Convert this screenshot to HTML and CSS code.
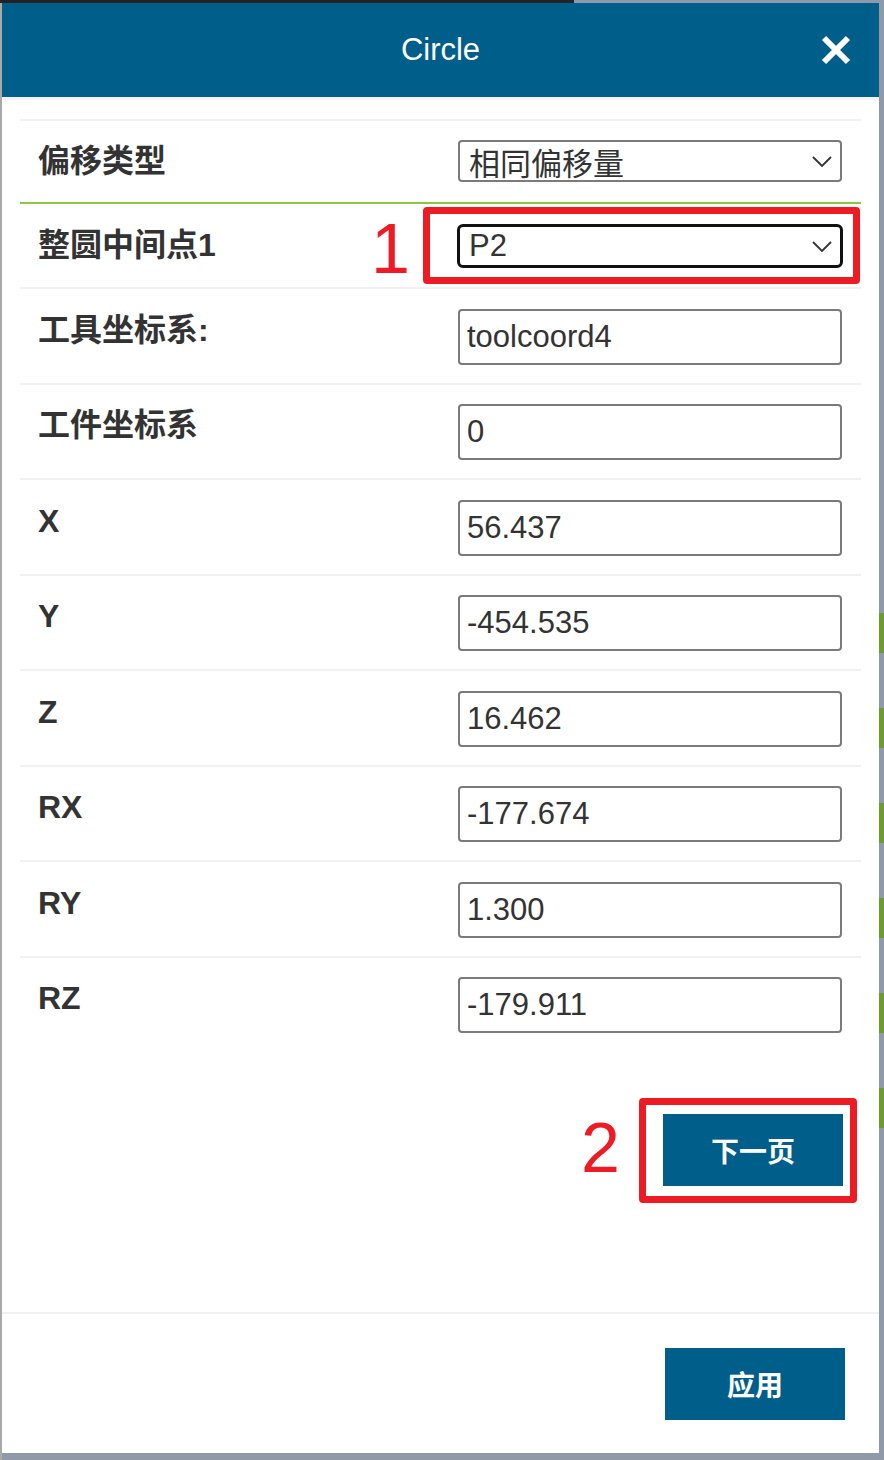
FILE: index.html
```html
<!DOCTYPE html>
<html lang="zh">
<head>
<meta charset="utf-8">
<title>Circle</title>
<link rel="stylesheet" href="styles.css">
</head>
<body>
<div class="screen">
  <div class="modal">
    <header class="modal-header">
      <h1 class="modal-title">Circle</h1>
      <button class="close" aria-label="关闭">
        <svg width="30" height="30" viewBox="0 0 30 30"><path d="M3 3 L27 27 M27 3 L3 27" stroke="#fff" stroke-width="6" fill="none"/></svg>
      </button>
    </header>
    <div class="modal-body">
      <div class="form-list">
        <div class="row row-offset">
          <label class="label">偏移类型</label>
          <div class="select"><span>相同偏移量</span><svg class="chev" width="20" height="11" viewBox="0 0 20 11"><polyline points="1,1 10,10 19,1" fill="none" stroke="#333" stroke-width="1.8"/></svg></div>
        </div>
        <div class="row row-point">
          <label class="label">整圆中间点1</label>
          <div class="select select-focus"><span>P2</span><svg class="chev" width="20" height="11" viewBox="0 0 20 11"><polyline points="1,1 10,10 19,1" fill="none" stroke="#333" stroke-width="1.8"/></svg>
            <span class="mark mark-1"></span><span class="mark-num num-1">1</span>
          </div>
        </div>
        <div class="row"><label class="label">工具坐标系:</label><input class="field" type="text" value="toolcoord4"></div>
        <div class="row"><label class="label">工件坐标系</label><input class="field" type="text" value="0"></div>
        <div class="row"><label class="label">X</label><input class="field" type="text" value="56.437"></div>
        <div class="row"><label class="label">Y</label><input class="field" type="text" value="-454.535"></div>
        <div class="row"><label class="label">Z</label><input class="field" type="text" value="16.462"></div>
        <div class="row"><label class="label">RX</label><input class="field" type="text" value="-177.674"></div>
        <div class="row"><label class="label">RY</label><input class="field" type="text" value="1.300"></div>
        <div class="row row-last"><label class="label">RZ</label><input class="field" type="text" value="-179.911"></div>
      </div>
      <div class="pager">
        <div class="next-wrap">
          <button class="btn">下一页</button>
          <span class="mark mark-2"></span><span class="mark-num num-2">2</span>
        </div>
      </div>
    </div>
    <footer class="modal-footer">
      <button class="btn">应用</button>
    </footer>
  </div>
</div>
</body>
</html>
```
FILE: styles.css
```css
* { box-sizing: border-box; }
html, body { margin: 0; padding: 0; }
body {
  font-family: "Liberation Sans", "Noto Sans CJK SC", sans-serif;
  color: #333;
}
.screen {
  position: relative;
  height: 1460px;
  padding: 3px 5px 7px 2px;
  background:
    linear-gradient(to right, #232323 574px, #8e9aab 574px) top left / 100% 3px no-repeat,
    linear-gradient(#a9a9a9, #a9a9a9) left top / 2px 100% no-repeat,
    #8f99a8;
}
.screen::after {
  content: "";
  position: absolute;
  right: 0;
  top: 613px;
  width: 5px;
  height: 520px;
  background: repeating-linear-gradient(to bottom, #6e9b2f 0 40px, transparent 40px 95px);
}
.modal {
  height: 1450px;
  background: #fff;
  display: flex;
  flex-direction: column;
}
.modal-header {
  flex: none;
  height: 97px;
  background: #005e8a;
  border-bottom: 3px solid #f2f2f4;
  display: grid;
  grid-template-columns: 1fr auto 1fr;
  align-items: center;
}
.modal-title {
  grid-column: 2;
  margin: 0;
  font-size: 31px;
  font-weight: normal;
  color: #fff;
}
.close {
  grid-column: 3;
  justify-self: end;
  margin-right: 28px;
  width: 30px;
  height: 30px;
  padding: 0;
  border: 0;
  background: none;
  display: flex;
}
.modal-body {
  flex: 1;
  padding: 19px 18px 0 18px;
}
.form-list {
  border-top: 2px solid #f1f1f1;
}
.row {
  display: grid;
  grid-template-columns: 1fr 384px;
  align-items: start;
  padding: 19.5px 19px 18px 18px;
  border-bottom: 2px solid #f1f1f1;
}
.row-offset {
  padding-top: 19px;
  padding-bottom: 20px;
  border-bottom-color: #8dc63f;
}
.row-point {
  padding-top: 20px;
  padding-bottom: 19px;
}
.row-last { border-bottom: 0; }
.label {
  font-size: 32px;
  font-weight: bold;
  line-height: 42px;
  color: #333;
}
.field {
  width: 384px;
  height: 56px;
  margin: 0;
  border: 2px solid #7b7b7b;
  border-radius: 4px;
  padding: 0 7px;
  font-family: "Liberation Sans", "Noto Sans CJK SC", sans-serif;
  font-size: 31px;
  color: #333;
  background: #fff;
  outline: none;
}
.select {
  position: relative;
  height: 42px;
  border: 2px solid #7b7b7b;
  border-radius: 4px;
  padding: 0 8px 0 9px;
  display: flex;
  align-items: center;
  justify-content: space-between;
  font-size: 31px;
  color: #333;
  background: #fff;
}
.select-focus {
  height: 44px;
  width: calc(100% + 2px);
  margin: 0 -1px;
  border: 3px solid #111;
  border-radius: 6px;
}
.chev { flex: none; }
.mark {
  position: absolute;
  border: 7px solid #ed1c24;
  border-radius: 4px;
  pointer-events: none;
}
.mark-1 { top: -20px; right: -20px; bottom: -19px; left: -37px; }
.mark-num {
  position: absolute;
  font-family: "Liberation Sans", sans-serif;
  font-size: 70px;
  line-height: 70px;
  color: #ed1c24;
}
.num-1 { left: -89px; top: -13px; }
.pager {
  display: flex;
  justify-content: flex-end;
  padding-right: 18px;
  margin-top: 63px;
}
.next-wrap { position: relative; }
.mark-2 { top: -16px; right: -14px; bottom: -17px; left: -24px; }
.num-2 { left: -82px; top: -1px; }
.btn {
  display: block;
  width: 180px;
  height: 72px;
  border: 0;
  border-radius: 0;
  background: #005e8a;
  color: #fff;
  font-family: "Noto Sans CJK SC", sans-serif;
  font-size: 28px;
  font-weight: bold;
  padding: 0;
}
.modal-footer {
  flex: none;
  border-top: 2px solid #f1f1f1;
  padding: 34px 34px 33px;
  display: flex;
  justify-content: flex-end;
}
```
